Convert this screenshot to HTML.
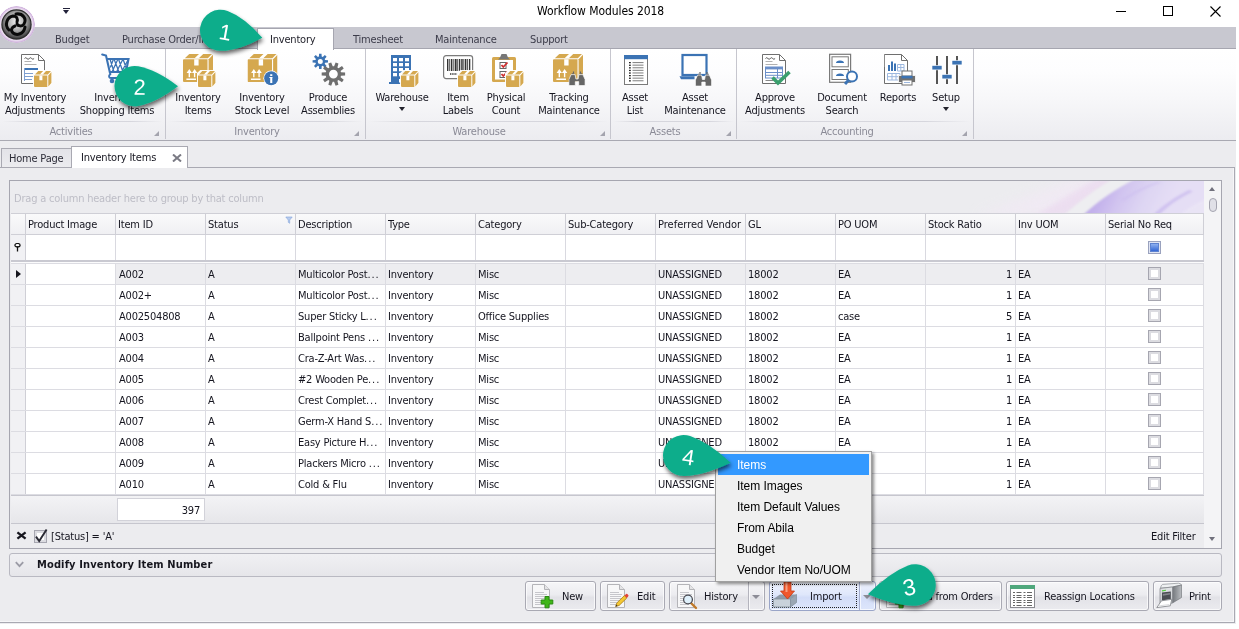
<!DOCTYPE html>
<html lang="en">
<head>
<meta charset="utf-8">
<title>Workflow Modules 2018</title>
<style>
html,body{margin:0;padding:0}
body{width:1239px;height:629px;overflow:hidden;background:#fff;position:relative;font-family:"DejaVu Sans Condensed","Liberation Sans",sans-serif;font-size:11px;color:#15151f;line-height:13px;letter-spacing:-0.2px}
.a{position:absolute}
.t{position:absolute;white-space:nowrap}
.c{position:absolute;white-space:nowrap;text-align:center;transform:translateX(-50%)}
#win{left:0;top:0;width:1236px;height:624px;background:#ececef;overflow:hidden;opacity:.999}
#title{left:0;top:0;width:1236px;height:27px;background:#fff}
#tabs{left:0;top:27px;width:1236px;height:21px;background:#c8c8d0;border-bottom:1px solid #a6a6b0}
#ribbon{left:0;top:49px;width:1236px;height:91px;background:linear-gradient(#ffffff 0%,#fdfdfe 25%,#f7f7f9 55%,#ececf0 100%);border-bottom:1px solid #a9a9b2}
.rtab{position:absolute;top:33px;font-size:11px;color:#3c3c4a;white-space:nowrap}
.gsep{position:absolute;top:49px;width:1px;height:90px;background:#c6c6ce}
.gcap{position:absolute;top:125px;font-size:11px;color:#8a8a96;white-space:nowrap;text-align:center;transform:translateX(-50%)}
.gline{position:absolute;top:121px;height:1px;background:linear-gradient(90deg,rgba(215,215,222,0),#d6d6dd 20%,#d6d6dd 80%,rgba(215,215,222,0))}
.rl{position:absolute;top:91px;font-size:11px;line-height:13px;color:#15151f;white-space:nowrap;text-align:center;transform:translateX(-50%)}
.ico{position:absolute;top:53px;width:32px;height:32px}
.launch{position:absolute;top:131px;width:0;height:0;border-left:5px solid transparent;border-bottom:5px solid #a4a4ae}

.dtab{position:absolute;box-sizing:border-box;border:1px solid #a9a9b2;border-bottom:none;white-space:nowrap}
#grid{left:9px;top:180px;width:1213px;height:369px;box-sizing:border-box;border:1px solid #a6a6b0;background:#ececef}
.hc{position:absolute;top:213px;height:21px;box-sizing:border-box;border-right:1px solid #cfcfd6;background:linear-gradient(#fafafb,#f0f0f3);padding:1px 0 0 2px;line-height:21px;white-space:nowrap;overflow:hidden}
.fc{position:absolute;top:235px;height:25px;box-sizing:border-box;border-right:1px solid #d9d9e0;background:#fff}
.row{position:absolute;left:11px;width:1193px;height:21px;box-sizing:border-box;border-bottom:1px solid #dcdce2;background:#fff}
.row.sel{background:#ededf0}
.ind{position:absolute;left:0;top:0;width:15px;height:20px;box-sizing:border-box;border-right:1px solid #cfcfd6;background:#f1f1f4}
.cell{position:absolute;top:0;height:20px;box-sizing:border-box;border-right:1px solid #dcdce2;padding:0 0 0 2px;line-height:21px;white-space:nowrap;overflow:hidden}
.cell.r{text-align:right;padding:0 3px 0 0}
.cb{position:absolute;left:42px;top:3px;width:13px;height:13px;box-sizing:border-box;border:1px solid #a6a6b0;background:#fff;box-shadow:inset 0 0 0 2px #dcdce1}

.btn{position:absolute;top:581px;height:30px;box-sizing:border-box;border:1px solid #a9a9b3;border-radius:3px;background:linear-gradient(#f6f6f8 0%,#ececf0 45%,#e2e2e7 55%,#ebebef 100%);box-shadow:inset 0 0 0 1px rgba(255,255,255,.7)}
.btn.hot{background:linear-gradient(#eef2fd 0%,#dfe7fb 45%,#d3ddf8 55%,#dde6fb 100%);border-color:#9aa5c8}
.bt{position:absolute;top:590px;white-space:nowrap}
.mi{position:absolute;left:737px;font-family:"Liberation Sans",sans-serif;font-size:12px;line-height:14px;color:#000;white-space:nowrap;letter-spacing:-0.05px}
</style>
</head>
<body>
<div id="win" class="a">
<div id="title" class="a"></div>
<div id="tabs" class="a"></div>
<div id="ribbon" class="a"></div>

<div class="t" id="ttl" style="left:537px;top:3px;font-size:12px;line-height:16px;color:#000;letter-spacing:-0.08px">Workflow Modules 2018</div>
<!-- window controls -->
<div class="a" style="left:1116px;top:11px;width:10px;height:1px;background:#000"></div>
<div class="a" style="left:1163px;top:6px;width:8px;height:8px;border:1px solid #000"></div>
<svg class="a" style="left:1210px;top:6px" width="11" height="11" viewBox="0 0 11 11"><path d="M0.5 0.5 L10.5 10.5 M10.5 0.5 L0.5 10.5" stroke="#000" stroke-width="1.1" fill="none"/></svg>
<!-- quick access arrow -->
<div class="a" style="left:63px;top:8px;width:7px;height:1px;background:#22223a"></div>
<div class="a" style="left:63px;top:10px;width:0;height:0;border-left:3.5px solid transparent;border-right:3.5px solid transparent;border-top:4px solid #22223a"></div>
<!-- ribbon tabs -->
<div class="a" style="left:257px;top:28px;width:75px;height:21px;background:#fff;border:1px solid #a6a6b0;border-bottom:none;box-sizing:content-box"></div>
<div class="rtab" style="left:55px">Budget</div>
<div class="rtab" style="left:122px">Purchase Order/Invoices</div>
<div class="rtab" style="left:270px;color:#1e1e28">Inventory</div>
<div class="rtab" style="left:353px">Timesheet</div>
<div class="rtab" style="left:435px">Maintenance</div>
<div class="rtab" style="left:530px">Support</div>
<!-- app logo -->
<svg class="a" style="left:-2px;top:5px" width="38" height="40" viewBox="0 0 38 40">
<defs>
<radialGradient id="lg1" cx="50%" cy="40%" r="60%"><stop offset="0" stop-color="#f4f4f4"/><stop offset="0.55" stop-color="#a8a8a8"/><stop offset="1" stop-color="#3a3a3a"/></radialGradient>
<radialGradient id="lg0" cx="50%" cy="50%" r="50%"><stop offset="0.8" stop-color="#f6f0f8"/><stop offset="0.9" stop-color="#e2cfea"/><stop offset="0.97" stop-color="#cfb0dc"/><stop offset="1" stop-color="#e9dcef" stop-opacity="0.5"/></radialGradient>
</defs>
<circle cx="18.5" cy="19.5" r="18.5" fill="url(#lg0)"/>
<circle cx="18.5" cy="19.5" r="15.2" fill="#2a2a2a"/>
<circle cx="18.5" cy="19.5" r="14" fill="url(#lg1)"/>
<g fill="none" stroke="#0a0a0a" stroke-width="3" stroke-linecap="round">
<path d="M18 9 C25 8 29 14 26 19 C24 22 20 21 19 19"/>
<path d="M27 22 C26 29 19 31 15 28 C12 25 14 22 17 21"/>
<path d="M11 25 C6 20 9 12 15 11 C19 11 20 14 19 17"/>
</g>
</svg>

<svg width="0" height="0" style="position:absolute">
<defs>
<symbol id="bigbox" viewBox="0 0 30 28">
<path d="M0 6.3 a1 1 0 0 1 1-1 H24.5 V28 H1 a1 1 0 0 1-1-1 Z" fill="#d5a84f"/>
<path d="M1.8 4.3 L6.3 0 H29 L24.8 4.3 Z" fill="#d5a84f"/>
<path d="M25.6 5.2 L30 0.8 V23.5 L25.6 28 Z" fill="#d5a84f"/>
<path d="M11.2 5.3 H15.6 V11.6 H11.2 Z M11.6 4.3 L16 0 H20.2 L15.8 4.3 Z" fill="#fff"/>
<path d="M6.3 15 L3.6 19 H5.6 V23.3 H7 V19 H9 Z M11.6 15 L8.9 19 H10.9 V23.3 H12.3 V19 H14.3 Z M3.4 24.6 H13 V26.1 H3.4 Z" fill="#fff"/>
</symbol>
<symbol id="smbox" viewBox="0 0 19 17">
<path d="M0 3 L4 -0.6 H19 V13.5 L15 17.6 H0 Z" fill="#fff" opacity="0.95"/>
<path d="M1 5.6 H14.3 V17 H2 a1 1 0 0 1-1-1 Z" fill="#d5a84f"/>
<path d="M2 4.5 L5.2 1 H18 L14.8 4.5 Z" fill="#d5a84f"/>
<path d="M15.3 5.4 L18.4 2 V13 L15.3 16.6 Z" fill="#d5a84f"/>
<path d="M6.4 5.6 H9.4 V10.2 H6.4 Z M6.9 4.5 L10.1 1 H13 L9.8 4.5 Z" fill="#fff"/>
</symbol>
<symbol id="doc" viewBox="0 0 24 30">
<path d="M0.5 0.5 H17.5 L23.5 6.5 V29.5 H0.5 Z" fill="#fff" stroke="#6f6f6f" stroke-width="1"/>
<path d="M17.5 0.5 V6.5 H23.5" fill="none" stroke="#6f6f6f" stroke-width="1"/>
<path d="M3.5 4.5 q1.2 -1.6 2.4 0 t2.4 0 t2.4 0 t2.4 0" fill="none" stroke="#444" stroke-width="0.9"/>
<path d="M3.5 7.5 h7 M3.5 10.5 h12" stroke="#a8a8a8" stroke-width="0.9"/>
</symbol>
<symbol id="binoc" viewBox="0 0 17 15">
<path d="M3.2 2.2 H5.8 V3.6 H3.2 Z M11.2 2.2 H13.8 V3.6 H11.2 Z" fill="#666"/>
<path d="M2.6 3.6 H6.6 L7.4 8 H9.6 L10.4 3.6 H14.4 L16.6 8.5 V14.6 H10.2 V10.6 H6.8 V14.6 H0.4 V8.5 Z" fill="#666" stroke="#fff" stroke-width="0.7"/>
<path d="M4.4 0.6 H5.6 V2.2 H4.4 Z M11.4 0.6 H12.6 V2.2 H11.4 Z" fill="#666"/>
</symbol>
</defs>
</svg>
<svg class="a" style="left:19px;top:53px" width="34" height="36" viewBox="0 0 34 36"><use href="#doc" x="2" y="1" width="24" height="30"/><path d="M5.5 15 H19 V17 H5.5 Z" fill="#3b73b4"/><path d="M5.5 20.5 H17 M5.5 23.5 H17 M5.5 26.5 H13" stroke="#7f9fd0" stroke-width="1"/><path d="M5.5 15 V28" stroke="#7f9fd0" stroke-width="1"/><use href="#smbox" x="14" y="17" width="19" height="17"/></svg>
<svg class="a" style="left:101px;top:53px" width="32" height="32" viewBox="0 0 32 32"><g fill="none" stroke="#3b73b4" stroke-linecap="round"><path d="M1.2 1.5 L5 2.6 L9 20 M6.5 6 H27.5 L25 19 H9.5" stroke-width="2.1"/><path d="M9 6 L13 19 M13 6 L18 19 M17.5 6 L22 19 M22 6 L25.5 16 M12.5 6 L9.5 14 M17 6 L11 19 M22 6 L15.5 19 M27 7 L20.5 19" stroke-width="1.25"/><path d="M9.5 21 C7 23 8 25 10 25 H25" stroke-width="1.9"/></g><circle cx="11" cy="28" r="2.3" fill="#3b73b4"/><circle cx="23" cy="28" r="2.3" fill="#3b73b4"/></svg>
<svg class="a" style="left:183px;top:54px" width="34" height="34" viewBox="0 0 34 34"><use href="#bigbox" x="0" y="0" width="30" height="28"/><use href="#smbox" x="14" y="16" width="19" height="17"/></svg>
<svg class="a" style="left:247px;top:54px" width="34" height="34" viewBox="0 0 34 34"><use href="#bigbox" x="0.5" y="0" width="30" height="28"/><circle cx="24.2" cy="24.2" r="7.8" fill="#fff"/><circle cx="24.2" cy="24.2" r="7" fill="#3b73b4"/><path d="M23.2 20.3 H25.3 V22 H23.2 Z M23.2 23 H25.3 V29 H23.2 Z" fill="#fff"/><path d="M22.3 23 H25.3 V24 H22.3Z" fill="#fff"/></svg>
<svg class="a" style="left:310px;top:53px" width="36" height="34" viewBox="0 0 36 34"><path d="M15.10 7.01 L18.00 7.18 L18.00 9.62 L15.10 9.79 L14.68 10.81 L16.61 12.98 L14.88 14.71 L12.71 12.78 L11.69 13.20 L11.52 16.10 L9.08 16.10 L8.91 13.20 L7.89 12.78 L5.72 14.71 L3.99 12.98 L5.92 10.81 L5.50 9.79 L2.60 9.62 L2.60 7.18 L5.50 7.01 L5.92 5.99 L3.99 3.82 L5.72 2.09 L7.89 4.02 L8.91 3.60 L9.08 0.70 L11.52 0.70 L11.69 3.60 L12.71 4.02 L14.88 2.09 L16.61 3.82 L14.68 5.99 Z M12.80 8.40 A2.5 2.5 0 1 0 7.80 8.40 A2.5 2.5 0 1 0 12.80 8.40 Z" fill="#3b73b4" fill-rule="evenodd"/><path d="M31.00 19.35 L35.11 19.62 L35.11 22.58 L31.00 22.85 L30.58 24.15 L33.74 26.78 L32.00 29.18 L28.52 26.98 L27.41 27.79 L28.42 31.78 L25.61 32.69 L24.09 28.87 L22.71 28.87 L21.19 32.69 L18.38 31.78 L19.39 27.79 L18.28 26.98 L14.80 29.18 L13.06 26.78 L16.22 24.15 L15.80 22.85 L11.69 22.58 L11.69 19.62 L15.80 19.35 L16.22 18.05 L13.06 15.42 L14.80 13.02 L18.28 15.22 L19.39 14.41 L18.38 10.42 L21.19 9.51 L22.71 13.33 L24.09 13.33 L25.61 9.51 L28.42 10.42 L27.41 14.41 L28.52 15.22 L32.00 13.02 L33.74 15.42 L30.58 18.05 Z M27.80 21.10 A4.4 4.4 0 1 0 19.00 21.10 A4.4 4.4 0 1 0 27.80 21.10 Z" fill="#6e6e6e" fill-rule="evenodd"/></svg>
<svg class="a" style="left:389px;top:53px" width="34" height="36" viewBox="0 0 34 36"><path d="M2 2 H22 V29 H2 Z" fill="#3b73b4"/><path d="M0 29 H14 V31 H0 Z" fill="#3b73b4"/><rect x="4.0" y="5.0" width="4" height="3.3" fill="#fff"/><rect x="4.0" y="10.0" width="4" height="3.3" fill="#fff"/><rect x="4.0" y="15.0" width="4" height="3.3" fill="#fff"/><rect x="4.0" y="20.0" width="4" height="3.3" fill="#fff"/><rect x="10.0" y="5.0" width="4" height="3.3" fill="#fff"/><rect x="10.0" y="10.0" width="4" height="3.3" fill="#fff"/><rect x="10.0" y="15.0" width="4" height="3.3" fill="#fff"/><rect x="10.0" y="20.0" width="4" height="3.3" fill="#fff"/><rect x="16.0" y="5.0" width="4" height="3.3" fill="#fff"/><rect x="16.0" y="10.0" width="4" height="3.3" fill="#fff"/><rect x="16.0" y="15.0" width="4" height="3.3" fill="#fff"/><rect x="16.0" y="20.0" width="4" height="3.3" fill="#fff"/><rect x="10" y="26" width="4" height="3.5" fill="#fff"/><use href="#smbox" x="11" y="17" width="19" height="17"/></svg>
<svg class="a" style="left:443px;top:53px" width="34" height="36" viewBox="0 0 34 36"><rect x="0.6" y="2.6" width="29" height="23" rx="2.5" fill="#fff" stroke="#7a7a7a" stroke-width="1.2"/><rect x="4" y="6" width="1.4" height="12" fill="#333"/><rect x="6.3" y="6" width="0.9" height="12" fill="#333"/><rect x="8" y="6" width="1.4" height="12" fill="#333"/><rect x="10.4" y="6" width="0.9" height="12" fill="#333"/><rect x="12" y="6" width="1.6" height="12" fill="#333"/><rect x="14.3" y="6" width="0.9" height="12" fill="#333"/><rect x="16" y="6" width="1.3" height="12" fill="#333"/><rect x="18.2" y="6" width="1.5" height="12" fill="#333"/><rect x="20.4" y="6" width="0.9" height="12" fill="#333"/><rect x="22" y="6" width="1.4" height="12" fill="#333"/><rect x="24.2" y="6" width="0.9" height="12" fill="#333"/><rect x="26" y="6" width="1.3" height="12" fill="#333"/><path d="M7 21 h8" stroke="#666" stroke-width="2" stroke-dasharray="1.4 0.8"/><use href="#smbox" x="14" y="17" width="19" height="17"/></svg>
<svg class="a" style="left:491px;top:53px" width="34" height="36" viewBox="0 0 34 36"><rect x="1" y="4" width="24" height="25" rx="1.5" fill="#d5a84f"/><rect x="4" y="7" width="18" height="19.5" fill="#fff"/><path d="M9 4.5 L10.5 1 H15.5 L17 4.5 L19 6.5 H7 Z" fill="#777"/><rect x="9" y="9.5" width="6" height="6" fill="#fff" stroke="#666" stroke-width="1"/><rect x="9" y="18.5" width="6" height="6" fill="#fff" stroke="#666" stroke-width="1"/><path d="M10.5 12 L12.3 14 L16.5 9.5" fill="none" stroke="#d03030" stroke-width="1.8"/><path d="M10.5 21 L12.3 23 L16.5 18.5" fill="none" stroke="#d03030" stroke-width="1.8"/><use href="#smbox" x="14" y="17" width="19" height="17"/></svg>
<svg class="a" style="left:553px;top:54px" width="34" height="34" viewBox="0 0 34 34"><use href="#bigbox" x="0" y="0" width="30" height="28"/><use href="#binoc" x="15.5" y="17" width="17" height="15"/></svg>
<svg class="a" style="left:624px;top:54px" width="26" height="34" viewBox="0 0 26 34"><rect x="0.5" y="1.5" width="23" height="29" fill="#fff" stroke="#7a7a7a" stroke-width="1"/><rect x="0" y="1" width="24" height="4.2" fill="#3b73b4"/><rect x="5" y="8.0" width="1.8" height="1.3" fill="#222"/><rect x="8.5" y="8.0" width="11" height="1.1" fill="#8a8a8a"/><rect x="5" y="10.6" width="1.8" height="1.3" fill="#222"/><rect x="8.5" y="10.6" width="11" height="1.1" fill="#8a8a8a"/><rect x="5" y="13.2" width="1.8" height="1.3" fill="#222"/><rect x="8.5" y="13.2" width="11" height="1.1" fill="#8a8a8a"/><rect x="5" y="15.8" width="1.8" height="1.3" fill="#222"/><rect x="8.5" y="15.8" width="11" height="1.1" fill="#8a8a8a"/><rect x="5" y="18.4" width="1.8" height="1.3" fill="#222"/><rect x="8.5" y="18.4" width="11" height="1.1" fill="#8a8a8a"/><rect x="5" y="21.0" width="1.8" height="1.3" fill="#222"/><rect x="8.5" y="21.0" width="11" height="1.1" fill="#8a8a8a"/><rect x="5" y="23.6" width="1.8" height="1.3" fill="#222"/><rect x="8.5" y="23.6" width="11" height="1.1" fill="#8a8a8a"/><rect x="5" y="26.2" width="1.8" height="1.3" fill="#222"/><rect x="8.5" y="26.2" width="11" height="1.1" fill="#8a8a8a"/></svg>
<svg class="a" style="left:679px;top:53px" width="34" height="36" viewBox="0 0 34 36"><rect x="3.5" y="2" width="24" height="20" fill="#fff" stroke="#3b73b4" stroke-width="2.2"/><path d="M0.5 23.2 H15.5 V26.2 H2 Z" fill="#3b73b4"/><use href="#binoc" x="16" y="18.5" width="17" height="15"/></svg>
<svg class="a" style="left:762px;top:53px" width="34" height="36" viewBox="0 0 34 36"><use href="#doc" x="0" y="1" width="24" height="30"/><rect x="3.5" y="14" width="17" height="11" fill="#fff" stroke="#6b8fc9" stroke-width="1"/><rect x="3.5" y="14" width="17" height="2.4" fill="#6b8fc9"/><path d="M3.5 19.5 H20.5 M3.5 22.3 H20.5 M15.5 14 V25" stroke="#6b8fc9" stroke-width="1"/><path d="M3.5 27.5 h8" stroke="#888" stroke-width="1"/><path d="M10.5 24.5 L16 30 L27.5 19" fill="none" stroke="#3a9f6e" stroke-width="3.6"/></svg>
<svg class="a" style="left:829px;top:53px" width="34" height="36" viewBox="0 0 34 36"><rect x="0.6" y="1.3" width="21" height="28" fill="#fff" stroke="#7a7a7a" stroke-width="1.2"/><rect x="3" y="3.8" width="16.3" height="10" fill="#fff" stroke="#7a7a7a" stroke-width="1"/><rect x="3" y="16.5" width="16.3" height="10" fill="#fff" stroke="#7a7a7a" stroke-width="1"/><path d="M7 10 a4 2.6 0 0 1 8 0 Z M7 23 a4 2.6 0 0 1 8 0 Z" fill="#3b73b4"/><circle cx="23" cy="23.5" r="5" fill="#fff" stroke="#3b73b4" stroke-width="2"/><path d="M19.5 27.2 L16 31" stroke="#3b73b4" stroke-width="3"/></svg>
<svg class="a" style="left:884px;top:53px" width="34" height="36" viewBox="0 0 34 36"><use href="#doc" x="0" y="1" width="24" height="30"/><rect x="0.8" y="2" width="15" height="12" fill="#fff"/><path d="M4 12 V18 H6 V12 Z M7 8.5 V18 H9 V8.5 Z M10 10.5 V18 H12 V10.5 Z" fill="#3b73b4"/><path d="M13.5 11.5 H20 V18 H13.5 Z M13.5 14.5 H20 M3.5 20.5 H16 V27 H3.5 Z M3.5 23.7 H16 M8 20.5 V27 M12 20.5 V27 M16.8 11.5 V18" fill="none" stroke="#9db8df" stroke-width="1"/><path d="M14.5 22.5 H31.5 V29.5 H14.5 Z" fill="#707070" stroke="#fff" stroke-width="0.8"/><rect x="18" y="18" width="10" height="5" fill="#fff" stroke="#707070" stroke-width="1"/><rect x="17.5" y="22.8" width="11" height="2.6" fill="#3b73b4"/><rect x="18" y="27" width="10" height="5" fill="#fff" stroke="#707070" stroke-width="1"/><path d="M20 29.5 h6" stroke="#9db8df" stroke-width="1"/></svg>
<svg class="a" style="left:930px;top:53px" width="34" height="36" viewBox="0 0 34 36"><path d="M7 3 V31 M17 3 V31 M27 3 V31" stroke="#555" stroke-width="2"/><rect x="2" y="12.5" width="10" height="4.4" fill="#3b73b4" stroke="#fff" stroke-width="0.6"/><rect x="12" y="21.5" width="10" height="4.4" fill="#3b73b4" stroke="#fff" stroke-width="0.6"/><rect x="22" y="7.5" width="10" height="4.4" fill="#3b73b4" stroke="#fff" stroke-width="0.6"/></svg>
<div class="rl" style="left:35px">My Inventory<br>Adjustments</div>
<div class="rl" style="left:117px">Inventory<br>Shopping Items</div>
<div class="rl" style="left:198px">Inventory<br>Items</div>
<div class="rl" style="left:262px">Inventory<br>Stock Level</div>
<div class="rl" style="left:328px">Produce<br>Assemblies</div>
<div class="rl" style="left:402px">Warehouse</div>
<div class="rl" style="left:458px">Item<br>Labels</div>
<div class="rl" style="left:506px">Physical<br>Count</div>
<div class="rl" style="left:569px">Tracking<br>Maintenance</div>
<div class="rl" style="left:635px">Asset<br>List</div>
<div class="rl" style="left:695px">Asset<br>Maintenance</div>
<div class="rl" style="left:775px">Approve<br>Adjustments</div>
<div class="rl" style="left:842px">Document<br>Search</div>
<div class="rl" style="left:898px">Reports</div>
<div class="rl" style="left:946px">Setup</div>
<div class="a" style="left:399px;top:107px;width:0;height:0;border-left:3.5px solid transparent;border-right:3.5px solid transparent;border-top:4px solid #22222c"></div>
<div class="a" style="left:943px;top:107px;width:0;height:0;border-left:3.5px solid transparent;border-right:3.5px solid transparent;border-top:4px solid #22222c"></div>
<div class="gsep" style="left:165px"></div>
<div class="gsep" style="left:365px"></div>
<div class="gsep" style="left:610px"></div>
<div class="gsep" style="left:736px"></div>
<div class="gsep" style="left:973px"></div>
<div class="gcap" style="left:71px">Activities</div>
<div class="gcap" style="left:257px">Inventory</div>
<div class="gcap" style="left:479px">Warehouse</div>
<div class="gcap" style="left:665px">Assets</div>
<div class="gcap" style="left:847px">Accounting</div>
<div class="gline" style="left:2px;width:161px"></div>
<div class="gline" style="left:168px;width:195px"></div>
<div class="gline" style="left:368px;width:240px"></div>
<div class="gline" style="left:613px;width:121px"></div>
<div class="gline" style="left:739px;width:232px"></div>
<div class="launch" style="left:154px"></div>
<div class="launch" style="left:354px"></div>
<div class="launch" style="left:600px"></div>
<div class="launch" style="left:726px"></div>
<div class="launch" style="left:962px"></div>


<!-- document tabs -->
<div class="a" style="left:0;top:167px;width:1235px;height:456px;box-sizing:border-box;border:1px solid #a9a9b2;border-left:none;background:#ececef;box-shadow:inset -1px -1px 0 #f6f6f8"></div>
<div class="dtab" style="left:1px;top:148px;width:71px;height:19px;background:linear-gradient(#e3e3e8,#ececef)"><span class="t" style="left:7px;top:3px;color:#2c2c38">Home Page</span></div>
<div class="dtab" style="left:71px;top:146px;width:117px;height:22px;background:#fff"><span class="t" style="left:9px;top:4px">Inventory Items</span>
<svg class="a" style="left:100px;top:7px" width="10" height="8" viewBox="0 0 10 8"><path d="M1 0.5 L9 7.5 M9 0.5 L1 7.5" stroke="#7a7a84" stroke-width="2" fill="none"/></svg></div>

<div id="grid" class="a"></div>
<div class="a" id="gp" style="left:11px;top:181px;width:1193px;height:32px;background:#ececef;overflow:hidden"><svg class="a" style="left:0;top:0" width="1193" height="32" viewBox="11 181 1193 32">
<defs><filter id="b8" x="-20%" y="-100%" width="140%" height="300%"><feGaussianBlur stdDeviation="6"/></filter><filter id="b3" x="-20%" y="-100%" width="140%" height="300%"><feGaussianBlur stdDeviation="2.5"/></filter><filter id="b1" x="-20%" y="-100%" width="140%" height="300%"><feGaussianBlur stdDeviation="0.8"/></filter>
<linearGradient id="sw1" gradientUnits="userSpaceOnUse" x1="1102" y1="192" x2="1160" y2="222"><stop offset="0" stop-color="#c2b0eb"/><stop offset="0.3" stop-color="#d2c5f0"/><stop offset="0.65" stop-color="#ded6f3"/><stop offset="1" stop-color="#e5def5"/></linearGradient></defs>
<path d="M975 216 L1075 178 L1112 178 L1045 216 Z" fill="#f2e9f5" opacity=".7" filter="url(#b8)"/>
<path d="M1034 216 L1098 178 L1116 178 L1066 216 Z" fill="#ebd6f0" opacity=".6" filter="url(#b3)"/>
<path d="M1064.5 215 C1078 203 1094 190 1113.5 179 L1135 179 C1114 190 1097 202 1083 215 Z" fill="#eeeef1" filter="url(#b1)"/>
<path d="M1083 215 C1097 202 1114 190 1135 179 L1206 179 L1206 215 Z" fill="url(#sw1)" filter="url(#b1)"/>
<path d="M1153 215 C1163 205 1175 197 1189 190 L1193 191.5 C1179 198 1168 206 1159 215 Z" fill="#c9baee" opacity=".75" filter="url(#b1)"/>
<path d="M1120 200 C1130 193 1142 187 1156 182 L1162 182 C1146 188 1134 194 1124 201 Z" fill="#cbbdef" opacity=".5" filter="url(#b1)"/>
<path d="M1180 215 C1188 208 1196 203 1206 199 L1206 215 Z" fill="#ebe6f6" opacity=".8" filter="url(#b1)"/>
</svg></div>
<div class="t" style="left:14px;top:192px;color:#bdbdc6">Drag a column header here to group by that column</div>
<div class="a" style="left:11px;top:213px;width:1193px;height:1px;background:#cfcfd6;z-index:2"></div>
<div class="hc" style="left:11px;width:15px;padding:0"></div>
<div class="hc" style="left:26px;width:90px">Product Image</div>
<div class="hc" style="left:116px;width:90px">Item ID</div>
<div class="hc" style="left:206px;width:90px">Status</div>
<div class="hc" style="left:296px;width:90px">Description</div>
<div class="hc" style="left:386px;width:90px">Type</div>
<div class="hc" style="left:476px;width:90px">Category</div>
<div class="hc" style="left:566px;width:90px">Sub-Category</div>
<div class="hc" style="left:656px;width:90px;letter-spacing:0">Preferred Vendor</div>
<div class="hc" style="left:746px;width:90px">GL</div>
<div class="hc" style="left:836px;width:90px">PO UOM</div>
<div class="hc" style="left:926px;width:90px">Stock Ratio</div>
<div class="hc" style="left:1016px;width:90px">Inv UOM</div>
<div class="hc" style="left:1106px;width:98px">Serial No Req</div>
<div class="a" style="left:11px;top:234px;width:1193px;height:1px;background:#cfcfd6"></div>
<svg class="a" style="left:285px;top:216px" width="8" height="8" viewBox="0 0 8 8"><path d="M0.8 1 H7.2 L4.7 4 V7.3 L3.3 6.3 V4 Z" fill="#b9cdee" stroke="#7d9fd8" stroke-width="0.6"/></svg>
<div class="fc" style="left:11px;width:15px;background:#f1f1f4;border-right:1px solid #cfcfd6"></div>
<div class="fc" style="left:26px;width:90px"></div>
<div class="fc" style="left:116px;width:90px"></div>
<div class="fc" style="left:206px;width:90px"></div>
<div class="fc" style="left:296px;width:90px"></div>
<div class="fc" style="left:386px;width:90px"></div>
<div class="fc" style="left:476px;width:90px"></div>
<div class="fc" style="left:566px;width:90px"></div>
<div class="fc" style="left:656px;width:90px"></div>
<div class="fc" style="left:746px;width:90px"></div>
<div class="fc" style="left:836px;width:90px"></div>
<div class="fc" style="left:926px;width:90px"></div>
<div class="fc" style="left:1016px;width:90px"></div>
<div class="fc" style="left:1106px;width:98px"></div>
<svg class="a" style="left:14px;top:243px" width="7" height="9" viewBox="0 0 7 9"><ellipse cx="3.5" cy="2.2" rx="2.6" ry="1.7" fill="#fff" stroke="#111" stroke-width="1.2"/><path d="M3.5 3.5 V8.5" stroke="#111" stroke-width="1.3"/></svg>
<div class="a" style="left:1148px;top:241px;width:13px;height:13px;box-sizing:border-box;border:1px solid #9aa2be;background:#dfe4f3"><div class="a" style="left:2px;top:2px;width:7px;height:7px;background:linear-gradient(#8db0f0,#3467d4);box-shadow:0 0 0 1px #5d82d0"></div></div>
<div class="a" style="left:11px;top:260px;width:1193px;height:2px;background:#c9c9d1"></div>
<div class="a" style="left:11px;top:262px;width:1193px;height:1px;background:#fbfbfc"></div>
<div class="a" style="left:11px;top:263px;width:1193px;height:1px;background:#dcdce2"></div>
<div class="row sel" style="top:264px"><div class="ind"></div><div class="cell" style="left:15px;width:90px;background:#fff;"></div><div class="cell" style="left:105px;width:90px;padding-left:3px">A002</div><div class="cell" style="left:195px;width:90px">A</div><div class="cell" style="left:285px;width:90px">Multicolor Post<span style="letter-spacing:.9px">...</span></div><div class="cell" style="left:375px;width:90px">Inventory</div><div class="cell" style="left:465px;width:90px">Misc</div><div class="cell" style="left:555px;width:90px"></div><div class="cell" style="left:645px;width:90px">UNASSIGNED</div><div class="cell" style="left:735px;width:90px">18002</div><div class="cell" style="left:825px;width:90px">EA</div><div class="cell r" style="left:915px;width:90px">1</div><div class="cell" style="left:1005px;width:90px">EA</div><div class="cell" style="left:1095px;width:98px;padding:0"><div class="cb"></div></div></div>
<div class="row" style="top:285px"><div class="ind"></div><div class="cell" style="left:15px;width:90px;"></div><div class="cell" style="left:105px;width:90px;padding-left:3px">A002+</div><div class="cell" style="left:195px;width:90px">A</div><div class="cell" style="left:285px;width:90px">Multicolor Post<span style="letter-spacing:.9px">...</span></div><div class="cell" style="left:375px;width:90px">Inventory</div><div class="cell" style="left:465px;width:90px">Misc</div><div class="cell" style="left:555px;width:90px"></div><div class="cell" style="left:645px;width:90px">UNASSIGNED</div><div class="cell" style="left:735px;width:90px">18002</div><div class="cell" style="left:825px;width:90px">EA</div><div class="cell r" style="left:915px;width:90px">1</div><div class="cell" style="left:1005px;width:90px">EA</div><div class="cell" style="left:1095px;width:98px;padding:0"><div class="cb"></div></div></div>
<div class="row" style="top:306px"><div class="ind"></div><div class="cell" style="left:15px;width:90px;"></div><div class="cell" style="left:105px;width:90px;padding-left:3px">A002504808</div><div class="cell" style="left:195px;width:90px">A</div><div class="cell" style="left:285px;width:90px">Super Sticky L<span style="letter-spacing:.9px">...</span></div><div class="cell" style="left:375px;width:90px">Inventory</div><div class="cell" style="left:465px;width:90px">Office Supplies</div><div class="cell" style="left:555px;width:90px"></div><div class="cell" style="left:645px;width:90px">UNASSIGNED</div><div class="cell" style="left:735px;width:90px">18002</div><div class="cell" style="left:825px;width:90px">case</div><div class="cell r" style="left:915px;width:90px">5</div><div class="cell" style="left:1005px;width:90px">EA</div><div class="cell" style="left:1095px;width:98px;padding:0"><div class="cb"></div></div></div>
<div class="row" style="top:327px"><div class="ind"></div><div class="cell" style="left:15px;width:90px;"></div><div class="cell" style="left:105px;width:90px;padding-left:3px">A003</div><div class="cell" style="left:195px;width:90px">A</div><div class="cell" style="left:285px;width:90px">Ballpoint Pens <span style="letter-spacing:.9px">...</span></div><div class="cell" style="left:375px;width:90px">Inventory</div><div class="cell" style="left:465px;width:90px">Misc</div><div class="cell" style="left:555px;width:90px"></div><div class="cell" style="left:645px;width:90px">UNASSIGNED</div><div class="cell" style="left:735px;width:90px">18002</div><div class="cell" style="left:825px;width:90px">EA</div><div class="cell r" style="left:915px;width:90px">1</div><div class="cell" style="left:1005px;width:90px">EA</div><div class="cell" style="left:1095px;width:98px;padding:0"><div class="cb"></div></div></div>
<div class="row" style="top:348px"><div class="ind"></div><div class="cell" style="left:15px;width:90px;"></div><div class="cell" style="left:105px;width:90px;padding-left:3px">A004</div><div class="cell" style="left:195px;width:90px">A</div><div class="cell" style="left:285px;width:90px">Cra-Z-Art Was<span style="letter-spacing:.9px">...</span></div><div class="cell" style="left:375px;width:90px">Inventory</div><div class="cell" style="left:465px;width:90px">Misc</div><div class="cell" style="left:555px;width:90px"></div><div class="cell" style="left:645px;width:90px">UNASSIGNED</div><div class="cell" style="left:735px;width:90px">18002</div><div class="cell" style="left:825px;width:90px">EA</div><div class="cell r" style="left:915px;width:90px">1</div><div class="cell" style="left:1005px;width:90px">EA</div><div class="cell" style="left:1095px;width:98px;padding:0"><div class="cb"></div></div></div>
<div class="row" style="top:369px"><div class="ind"></div><div class="cell" style="left:15px;width:90px;"></div><div class="cell" style="left:105px;width:90px;padding-left:3px">A005</div><div class="cell" style="left:195px;width:90px">A</div><div class="cell" style="left:285px;width:90px">#2 Wooden Pe<span style="letter-spacing:.9px">...</span></div><div class="cell" style="left:375px;width:90px">Inventory</div><div class="cell" style="left:465px;width:90px">Misc</div><div class="cell" style="left:555px;width:90px"></div><div class="cell" style="left:645px;width:90px">UNASSIGNED</div><div class="cell" style="left:735px;width:90px">18002</div><div class="cell" style="left:825px;width:90px">EA</div><div class="cell r" style="left:915px;width:90px">1</div><div class="cell" style="left:1005px;width:90px">EA</div><div class="cell" style="left:1095px;width:98px;padding:0"><div class="cb"></div></div></div>
<div class="row" style="top:390px"><div class="ind"></div><div class="cell" style="left:15px;width:90px;"></div><div class="cell" style="left:105px;width:90px;padding-left:3px">A006</div><div class="cell" style="left:195px;width:90px">A</div><div class="cell" style="left:285px;width:90px">Crest Complet<span style="letter-spacing:.9px">...</span></div><div class="cell" style="left:375px;width:90px">Inventory</div><div class="cell" style="left:465px;width:90px">Misc</div><div class="cell" style="left:555px;width:90px"></div><div class="cell" style="left:645px;width:90px">UNASSIGNED</div><div class="cell" style="left:735px;width:90px">18002</div><div class="cell" style="left:825px;width:90px">EA</div><div class="cell r" style="left:915px;width:90px">1</div><div class="cell" style="left:1005px;width:90px">EA</div><div class="cell" style="left:1095px;width:98px;padding:0"><div class="cb"></div></div></div>
<div class="row" style="top:411px"><div class="ind"></div><div class="cell" style="left:15px;width:90px;"></div><div class="cell" style="left:105px;width:90px;padding-left:3px">A007</div><div class="cell" style="left:195px;width:90px">A</div><div class="cell" style="left:285px;width:90px">Germ-X Hand S<span style="letter-spacing:.9px">...</span></div><div class="cell" style="left:375px;width:90px">Inventory</div><div class="cell" style="left:465px;width:90px">Misc</div><div class="cell" style="left:555px;width:90px"></div><div class="cell" style="left:645px;width:90px">UNASSIGNED</div><div class="cell" style="left:735px;width:90px">18002</div><div class="cell" style="left:825px;width:90px">EA</div><div class="cell r" style="left:915px;width:90px">1</div><div class="cell" style="left:1005px;width:90px">EA</div><div class="cell" style="left:1095px;width:98px;padding:0"><div class="cb"></div></div></div>
<div class="row" style="top:432px"><div class="ind"></div><div class="cell" style="left:15px;width:90px;"></div><div class="cell" style="left:105px;width:90px;padding-left:3px">A008</div><div class="cell" style="left:195px;width:90px">A</div><div class="cell" style="left:285px;width:90px">Easy Picture H<span style="letter-spacing:.9px">...</span></div><div class="cell" style="left:375px;width:90px">Inventory</div><div class="cell" style="left:465px;width:90px">Misc</div><div class="cell" style="left:555px;width:90px"></div><div class="cell" style="left:645px;width:90px">UNASSIGNED</div><div class="cell" style="left:735px;width:90px">18002</div><div class="cell" style="left:825px;width:90px">EA</div><div class="cell r" style="left:915px;width:90px">1</div><div class="cell" style="left:1005px;width:90px">EA</div><div class="cell" style="left:1095px;width:98px;padding:0"><div class="cb"></div></div></div>
<div class="row" style="top:453px"><div class="ind"></div><div class="cell" style="left:15px;width:90px;"></div><div class="cell" style="left:105px;width:90px;padding-left:3px">A009</div><div class="cell" style="left:195px;width:90px">A</div><div class="cell" style="left:285px;width:90px">Plackers Micro <span style="letter-spacing:.9px">...</span></div><div class="cell" style="left:375px;width:90px">Inventory</div><div class="cell" style="left:465px;width:90px">Misc</div><div class="cell" style="left:555px;width:90px"></div><div class="cell" style="left:645px;width:90px">UNASSIGNED</div><div class="cell" style="left:735px;width:90px">18002</div><div class="cell" style="left:825px;width:90px">EA</div><div class="cell r" style="left:915px;width:90px">1</div><div class="cell" style="left:1005px;width:90px">EA</div><div class="cell" style="left:1095px;width:98px;padding:0"><div class="cb"></div></div></div>
<div class="row" style="top:474px"><div class="ind"></div><div class="cell" style="left:15px;width:90px;"></div><div class="cell" style="left:105px;width:90px;padding-left:3px">A010</div><div class="cell" style="left:195px;width:90px">A</div><div class="cell" style="left:285px;width:90px">Cold &amp; Flu</div><div class="cell" style="left:375px;width:90px">Inventory</div><div class="cell" style="left:465px;width:90px">Misc</div><div class="cell" style="left:555px;width:90px"></div><div class="cell" style="left:645px;width:90px">UNASSIGNED</div><div class="cell" style="left:735px;width:90px">18002</div><div class="cell" style="left:825px;width:90px">EA</div><div class="cell r" style="left:915px;width:90px">1</div><div class="cell" style="left:1005px;width:90px">EA</div><div class="cell" style="left:1095px;width:98px;padding:0"><div class="cb"></div></div></div>
<div class="a" style="left:16px;top:270px;width:0;height:0;border-top:4px solid transparent;border-bottom:4px solid transparent;border-left:5px solid #16161e"></div>
<div class="a" style="left:11px;top:495px;width:1193px;height:29px;background:linear-gradient(#f3f3f5,#e6e6ea);border-top:1px solid #c6c6ce;border-bottom:1px solid #c6c6ce;box-sizing:border-box"></div>
<div class="a" style="left:117px;top:498px;width:88px;height:23px;box-sizing:border-box;border:1px solid #d2d2d9;background:#fff;text-align:right;padding-right:4px;line-height:24px">397</div>
<div class="a" style="left:11px;top:524px;width:1193px;height:24px;background:#ececef"></div>
<svg class="a" style="left:16px;top:531px" width="11" height="9" viewBox="0 0 11 9"><path d="M1.4 1.3 L9.6 7.7 M9.6 1.3 L1.4 7.7" stroke="#16161e" stroke-width="2.3" fill="none"/></svg>
<div class="a" style="left:34px;top:530px;width:13px;height:13px;box-sizing:border-box;border:1px solid #a6a6b0;background:#fff;box-shadow:inset 0 0 0 2px #dcdce1"></div>
<svg class="a" style="left:35px;top:528px" width="13" height="15" viewBox="0 0 13 15"><path d="M1 8.6 L4.2 13 L11.6 1.4" fill="none" stroke="#2a2a34" stroke-width="1.9"/></svg>
<div class="t" style="left:51px;top:530px">[Status] = 'A'</div>
<div class="t" style="left:1151px;top:530px">Edit Filter</div>
<div class="a" style="left:1204px;top:181px;width:17px;height:367px;background:#f4f4f6"></div>
<div class="a" style="left:1209px;top:187px;width:0;height:0;border-left:3.5px solid transparent;border-right:3.5px solid transparent;border-bottom:4px solid #70707c"></div>
<div class="a" style="left:1209px;top:537px;width:0;height:0;border-left:3.5px solid transparent;border-right:3.5px solid transparent;border-top:4px solid #70707c"></div>
<div class="a" style="left:1209px;top:198px;width:8px;height:14px;box-sizing:border-box;border:1px solid #a4a4b0;border-radius:4px;background:#e0e0e7"></div>

<div class="a" style="left:9px;top:553px;width:1213px;height:24px;box-sizing:border-box;border:1px solid #b9b9c2;border-radius:3px;background:linear-gradient(#f0f0f3,#e6e6ea)"></div>
<svg class="a" style="left:15px;top:561px" width="9" height="7" viewBox="0 0 9 7"><path d="M0.8 1.2 L4.5 5.2 L8.2 1.2" fill="none" stroke="#9c9ca6" stroke-width="1.8"/></svg>
<div class="t" id="mod" style="left:37px;top:558px;font-weight:bold;color:#16161e;letter-spacing:0.13px">Modify Inventory Item Number</div>
<div class="btn" style="left:525px;width:71px"></div>
<div class="btn" style="left:600px;width:65px"></div>
<div class="btn" style="left:669px;width:96px"></div>
<div class="btn hot" style="left:769px;width:107px"></div>
<div class="btn" style="left:879px;width:123px"></div>
<div class="btn" style="left:1006px;width:143px"></div>
<div class="btn" style="left:1153px;width:69px"></div>
<div class="a" style="left:748px;top:582px;width:1px;height:28px;background:#b4b4bd"></div><div class="a" style="left:749px;top:582px;width:1px;height:28px;background:#f8f8fa"></div>
<div class="a" style="left:859px;top:582px;width:1px;height:28px;background:#a6b0d0"></div><div class="a" style="left:860px;top:582px;width:1px;height:28px;background:#f4f7fe"></div>
<div class="a" style="left:752px;top:595px;width:0;height:0;border-left:4px solid transparent;border-right:4px solid transparent;border-top:4px solid #8c8c96"></div>
<div class="a" style="left:863px;top:595px;width:0;height:0;border-left:4px solid transparent;border-right:4px solid transparent;border-top:4px solid #8c8c96"></div>
<div class="a" style="left:772px;top:584px;width:85px;height:24px;box-sizing:border-box;border:1px dotted #222"></div>
<svg class="a" style="left:532px;top:584px" width="24" height="26" viewBox="0 0 24 26"><path d="M0.5 0.5 H12.5 L17.5 5.5 V23.5 H0.5 Z" fill="#f7f7f8" stroke="#b4b4b8" stroke-width="1"/><path d="M12.5 0.5 V5.5 H17.5" fill="#e4e4e6" stroke="#b4b4b8" stroke-width="1"/><path d="M3 8.5 h9 M3 10.5 h12 M3 12.5 h11 M3 14.5 h12 M3 16.5 h10 M3 18.5 h12 M3 20.5 h9" stroke="#c6c6cb" stroke-width="1"/><path d="M13 12.5 H17 V16 H20.8 V20 H17 V23.8 H13 V20 H9.2 V16 H13 Z" fill="#3fb618" stroke="#2b8a10" stroke-width="1"/></svg>
<div class="bt" style="left:562px">New</div>
<svg class="a" style="left:607px;top:584px" width="24" height="26" viewBox="0 0 24 26"><path d="M0.5 0.5 H12.5 L17.5 5.5 V23.5 H0.5 Z" fill="#f7f7f8" stroke="#b4b4b8" stroke-width="1"/><path d="M12.5 0.5 V5.5 H17.5" fill="#e4e4e6" stroke="#b4b4b8" stroke-width="1"/><path d="M3 8.5 h9 M3 10.5 h12 M3 12.5 h11 M3 14.5 h12 M3 16.5 h10 M3 18.5 h12 M3 20.5 h9" stroke="#c6c6cb" stroke-width="1"/><path d="M8.6 22.6 L9.8 19 L17.4 11.6 L19.8 14 L12.2 21.4 Z" fill="#f3c733" stroke="#a87c1a" stroke-width="0.8"/><path d="M17.4 11.6 L18.6 10.4 a1.4 1.4 0 0 1 2.2 0.2 a1.4 1.4 0 0 1 0.2 2.2 L19.8 14 Z" fill="#e2453a"/><path d="M8.6 22.6 L9.3 20.6 L10.6 21.9 Z" fill="#333"/></svg>
<div class="bt" style="left:637px">Edit</div>
<svg class="a" style="left:677px;top:584px" width="24" height="26" viewBox="0 0 24 26"><path d="M0.5 0.5 H12.5 L17.5 5.5 V23.5 H0.5 Z" fill="#f7f7f8" stroke="#b4b4b8" stroke-width="1"/><path d="M12.5 0.5 V5.5 H17.5" fill="#e4e4e6" stroke="#b4b4b8" stroke-width="1"/><path d="M3 8.5 h9 M3 10.5 h12 M3 12.5 h11 M3 14.5 h12 M3 16.5 h10 M3 18.5 h12 M3 20.5 h9" stroke="#c6c6cb" stroke-width="1"/><path d="M13.5 18.5 L19 24" stroke="#c07a2a" stroke-width="2.4" stroke-linecap="round"/><circle cx="11" cy="15.5" r="4.4" fill="#dff0fb" stroke="#4a4a52" stroke-width="1.3"/></svg>
<div class="bt" style="left:704px">History</div>
<svg class="a" style="left:773px;top:581px" width="26" height="28" viewBox="0 0 26 28"><path d="M0.5 18 L7 13.5 H23.5 L17.5 18 Z" fill="#8f9ba8"/><path d="M0.5 18 H17.5 V26 H0.5 Z" fill="#c9d2db" stroke="#8793a0" stroke-width="0.8"/><path d="M17.5 18 L23.5 13.5 V21.5 L17.5 26 Z" fill="#9aa6b3" stroke="#8793a0" stroke-width="0.8"/><path d="M11 1 H18 V10 H21.5 L14.5 18 L7.5 10 H11 Z" fill="#f0572c" stroke="#c43a14" stroke-width="0.8"/><path d="M12.5 1.5 H14.5 V11 H12.5 Z" fill="#f9a080"/></svg>
<div class="bt" style="left:810px">Import</div>
<svg class="a" style="left:886px;top:584px" width="24" height="26" viewBox="0 0 24 26"><path d="M0.5 0.5 H12.5 L17.5 5.5 V23.5 H0.5 Z" fill="#f7f7f8" stroke="#b4b4b8" stroke-width="1"/><path d="M12.5 0.5 V5.5 H17.5" fill="#e4e4e6" stroke="#b4b4b8" stroke-width="1"/><path d="M3 8.5 h9 M3 10.5 h12 M3 12.5 h11 M3 14.5 h12 M3 16.5 h10 M3 18.5 h12 M3 20.5 h9" stroke="#c6c6cb" stroke-width="1"/><path d="M13 12.5 H17 V16 H20.8 V20 H17 V23.8 H13 V20 H9.2 V16 H13 Z" fill="#3fb618" stroke="#2b8a10" stroke-width="1"/></svg>
<div class="bt" style="left:914px">Add from Orders</div>
<svg class="a" style="left:1010px;top:585px" width="25" height="23" viewBox="0 0 25 23"><rect x="0.5" y="0.5" width="24" height="22" fill="#fff" stroke="#8a8a90" stroke-width="1"/><rect x="0" y="0" width="25" height="4" fill="#4fa77c"/><path d="M3 7.5 h2 M6.5 7.5 h5 M13.5 7.5 h2 M17 7.5 h5" stroke="#555" stroke-width="0.9"/><path d="M3 10.5 h2 M6.5 10.5 h5 M13.5 10.5 h2 M17 10.5 h5" stroke="#555" stroke-width="0.9"/><path d="M3 12.5 h2 M6.5 12.5 h5 M13.5 12.5 h2 M17 12.5 h5" stroke="#555" stroke-width="0.9"/><path d="M3 15.5 h2 M6.5 15.5 h5 M13.5 15.5 h2 M17 15.5 h5" stroke="#555" stroke-width="0.9"/><path d="M3 17.5 h2 M6.5 17.5 h5 M13.5 17.5 h2 M17 17.5 h5" stroke="#555" stroke-width="0.9"/><path d="M3 20.5 h2 M6.5 20.5 h5 M13.5 20.5 h2 M17 20.5 h5" stroke="#555" stroke-width="0.9"/></svg>
<div class="bt" style="left:1044px">Reassign Locations</div>
<svg class="a" style="left:1155px;top:581px" width="30" height="30" viewBox="0 0 30 30">
<defs><linearGradient id="prs" x1="0" y1="0" x2="1" y2="0"><stop offset="0" stop-color="#74787d"/><stop offset="1" stop-color="#b9bcc0"/></linearGradient><linearGradient id="prf" x1="0" y1="0" x2="0" y2="1"><stop offset="0" stop-color="#e3e5e8"/><stop offset="1" stop-color="#bfc2c6"/></linearGradient></defs>
<path d="M7.5 3.4 L23.5 2.2 Q26 2.4 26.5 4 L17.5 6 L5.5 7.2 Q5.8 4.4 7.5 3.4 Z" fill="#eef0f2" stroke="#8d9095" stroke-width="0.7"/>
<path d="M17.5 6 L26.5 4 V16.5 L17.5 22 Z" fill="url(#prs)" stroke="#6a6d72" stroke-width="0.6"/>
<path d="M5 7.4 L17.5 6 V22 L5 24 Z" fill="url(#prf)" stroke="#7d8085" stroke-width="0.7"/>
<path d="M7 11.6 L15.8 10.4 V18 L7 19.4 Z" fill="#4b4e53"/>
<path d="M7.8 13 L15 12 V13.6 L7.8 14.7 Z" fill="#85888d"/>
<path d="M7 9.2 L11 8.7 V9.8 L7 10.4 Z" fill="#55d040"/>
<path d="M6.5 19.8 L16.8 18.3 L15.3 24.8 L1.8 26.6 Z" fill="#fff" stroke="#7d8085" stroke-width="0.8"/>
<path d="M4 24.9 L14.4 23.5" stroke="#cfd1d4" stroke-width="0.8"/>
</svg>
<div class="bt" style="left:1189px">Print</div>

<div class="a" style="left:715px;top:451px;width:157px;height:131px;box-sizing:border-box;border:1px solid #a0a0a0;background:#f0f0f0;box-shadow:2px 2px 3px rgba(0,0,0,.45)"></div>
<div class="a" style="left:718px;top:454px;width:151px;height:21px;background:#3399ff"></div>
<div class="mi" style="top:458px;color:#fff;">Items</div>
<div class="mi" style="top:479px;">Item Images</div>
<div class="mi" style="top:500px;">Item Default Values</div>
<div class="mi" style="top:521px;">From Abila</div>
<div class="mi" style="top:542px;">Budget</div>
<div class="mi" style="top:563px;">Vendor Item No/UOM</div>

<svg class="a" style="left:0;top:0;pointer-events:none" width="1239" height="629" viewBox="0 0 1239 629"><defs><filter id="sh" x="-20%" y="-20%" width="150%" height="160%"><feGaussianBlur in="SourceAlpha" stdDeviation="2.2"/><feOffset dx="1" dy="3"/><feComponentTransfer><feFuncA type="linear" slope="0.6"/></feComponentTransfer><feMerge><feMergeNode/><feMergeNode in="SourceGraphic"/></feMerge></filter></defs>
<path d="M227.57 11.06 Q244.10 17.13 262.30 37.80 Q238.05 50.85 220.44 50.80 A20.5 20.5 0 1 1 227.57 11.06 Z" fill="#0aad8b" filter="url(#sh)"/><text x="225.4" y="39.9" transform="rotate(10.2 225.4 32.0)" style="font-family:'Liberation Sans',sans-serif;letter-spacing:0" font-size="22" fill="#fff" text-anchor="middle">1</text>
<path d="M138.14 66.31 Q155.86 69.48 178.00 86.20 Q155.78 102.82 138.04 105.90 A20.1 20.1 0 1 1 138.14 66.31 Z" fill="#0aad8b" filter="url(#sh)"/><text x="139.6" y="94.8" transform="rotate(0.1 139.6 86.9)" style="font-family:'Liberation Sans',sans-serif;letter-spacing:0" font-size="22" fill="#fff" text-anchor="middle">2</text>
<path d="M915.42 605.70 Q895.51 606.10 867.90 594.30 Q888.96 572.89 907.52 565.70 A20.7 20.7 0 1 1 915.42 605.70 Z" fill="#0aad8b" filter="url(#sh)"/><text x="909.1" y="595.2" transform="rotate(-11.2 909.1 587.0)" style="font-family:'Liberation Sans',sans-serif;letter-spacing:0" font-size="23" fill="#fff" text-anchor="middle">3</text>
<path d="M690.10 436.09 Q708.86 442.47 730.70 462.80 Q703.74 475.58 683.93 476.00 A20.5 20.5 0 1 1 690.10 436.09 Z" fill="#0aad8b" filter="url(#sh)"/><text x="688.4" y="464.9" transform="rotate(8.8 688.4 457.1)" style="font-family:'Liberation Sans',sans-serif;letter-spacing:0" font-size="22" fill="#fff" text-anchor="middle">4</text>
</svg>

</div>
</body>
</html>
